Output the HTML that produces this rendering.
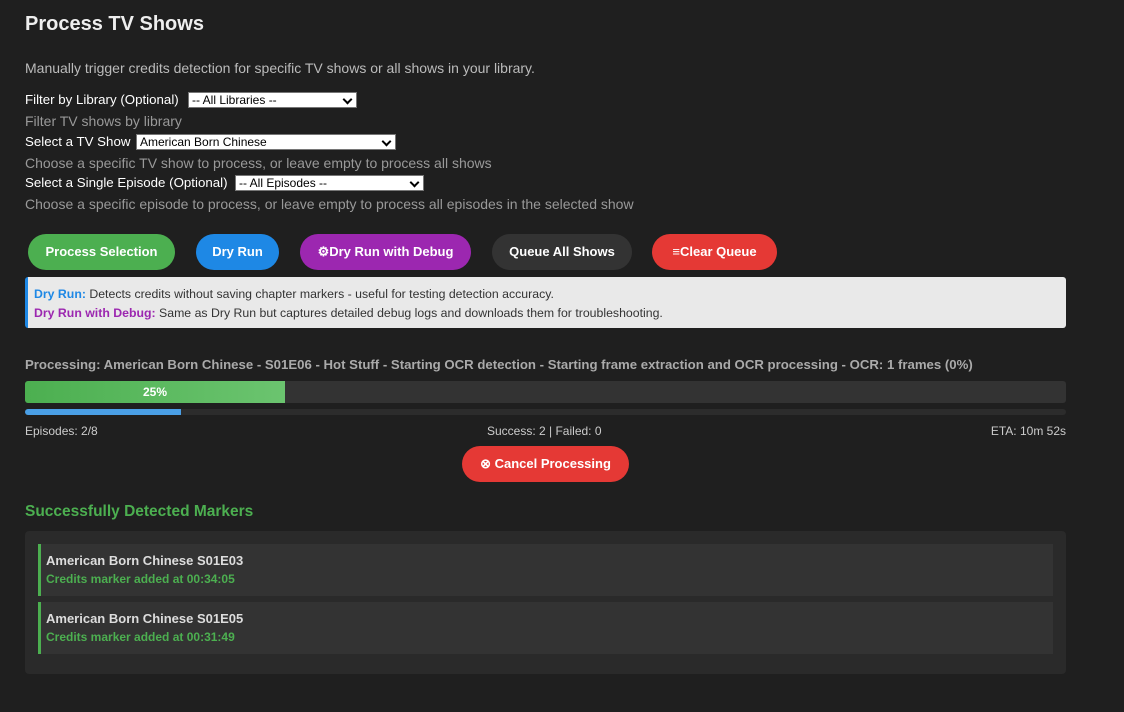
<!DOCTYPE html>
<html><head><style>
*{margin:0;padding:0;box-sizing:border-box}
body{width:1124px;height:712px;background:#1f1f1f;font-family:"Liberation Sans",sans-serif;position:relative;overflow:hidden;color:#ddd}
.a{position:absolute;white-space:nowrap}
.sel{position:absolute;height:16px;background:#fff;border:1px solid #767676;color:#000;font-size:12px;line-height:14px;padding-left:3px}
.sel:after{content:"";position:absolute;right:5px;top:3px;width:5px;height:5px;border-right:2px solid #000;border-bottom:2px solid #000;transform:rotate(45deg)}
.btn{position:absolute;height:36px;border-radius:18px;color:#fff;font-weight:bold;font-size:13px;line-height:36px;text-align:center;top:234px}
.lbl{font-size:13.3px;color:#fff}
</style></head><body>
<div class="a" style="left:25px;top:13px;font-size:20px;font-weight:bold;color:#eee">Process TV Shows</div>
<div class="a" style="left:25px;top:60px;font-size:14px;color:#bbb">Manually trigger credits detection for specific TV shows or all shows in your library.</div>
<div class="a lbl" style="left:25px;top:92px">Filter by Library (Optional)</div>
<div class="sel" style="left:188px;top:92px;width:169px">-- All Libraries --</div>
<div class="a" style="left:25px;top:113px;font-size:14px;color:#999">Filter TV shows by library</div>
<div class="a lbl" style="left:25px;top:134px">Select a TV Show</div>
<div class="sel" style="left:136px;top:134px;width:260px">American Born Chinese</div>
<div class="a" style="left:25px;top:155px;font-size:14px;color:#999">Choose a specific TV show to process, or leave empty to process all shows</div>
<div class="a lbl" style="left:25px;top:175px">Select a Single Episode (Optional)</div>
<div class="sel" style="left:235px;top:175px;width:189px">-- All Episodes --</div>
<div class="a" style="left:25px;top:196px;font-size:14px;color:#999">Choose a specific episode to process, or leave empty to process all episodes in the selected show</div>
<div class="btn" style="left:28px;width:147px;background:#4caf50">Process Selection</div>
<div class="btn" style="left:196px;width:83px;background:#1e88e5">Dry Run</div>
<div class="btn" style="left:300px;width:171px;background:#9c27b0">⚙Dry Run with Debug</div>
<div class="btn" style="left:492px;width:140px;background:#333">Queue All Shows</div>
<div class="btn" style="left:652px;width:125px;background:#e53935">≡Clear Queue</div>
<div class="a" style="left:25px;top:277px;width:1041px;height:51px;background:#e9e9e9;border-left:3px solid #1e88e5;border-radius:3px;font-size:12.3px;color:#333;padding:8px 0 0 6px;line-height:19px">
<div><b style="color:#1e88e5">Dry Run:</b> Detects credits without saving chapter markers - useful for testing detection accuracy.</div>
<div><b style="color:#9c27b0">Dry Run with Debug:</b> Same as Dry Run but captures detailed debug logs and downloads them for troubleshooting.</div></div>
<div class="a" style="left:25px;top:357px;font-size:13.2px;font-weight:bold;color:#aaa">Processing: American Born Chinese - S01E06 - Hot Stuff - Starting OCR detection - Starting frame extraction and OCR processing - OCR: 1 frames (0%)</div>
<div class="a" style="left:25px;top:381px;width:1041px;height:22px;background:#333;border-radius:3px;overflow:hidden">
<div style="width:260px;height:22px;background:linear-gradient(90deg,#4caf50,#6bc46f);color:#fff;font-weight:bold;font-size:12px;text-align:center;line-height:22px">25%</div></div>
<div class="a" style="left:25px;top:409px;width:1041px;height:6px;background:#2c2c2c;border-radius:3px;overflow:hidden"><div style="width:156px;height:6px;background:#4a9fe6"></div></div>
<div class="a" style="left:25px;top:424px;font-size:12px;color:#ccc">Episodes: 2/8</div>
<div class="a" style="left:487px;top:424px;font-size:12px;color:#ccc">Success: 2 | Failed: 0</div>
<div class="a" style="right:58px;top:424px;font-size:12px;color:#ccc">ETA: 10m 52s</div>
<div class="btn" style="left:462px;top:446px;width:167px;background:#e53935">⊗ Cancel Processing</div>
<div class="a" style="left:25px;top:503px;font-size:15.5px;font-weight:bold;color:#4caf50">Successfully Detected Markers</div>
<div class="a" style="left:25px;top:531px;width:1041px;height:143px;background:#2a2a2a;border-radius:4px"></div>
<div class="a" style="left:38px;top:544px;width:1015px;height:52px;background:#333;border-left:3px solid #4caf50;padding:9px 0 0 5px">
<div style="font-size:13px;font-weight:bold;color:#ddd">American Born Chinese S01E03</div>
<div style="font-size:12px;font-weight:bold;color:#4caf50;margin-top:4px">Credits marker added at 00:34:05</div></div>
<div class="a" style="left:38px;top:602px;width:1015px;height:52px;background:#333;border-left:3px solid #4caf50;padding:9px 0 0 5px">
<div style="font-size:13px;font-weight:bold;color:#ddd">American Born Chinese S01E05</div>
<div style="font-size:12px;font-weight:bold;color:#4caf50;margin-top:4px">Credits marker added at 00:31:49</div></div>
</body></html>
